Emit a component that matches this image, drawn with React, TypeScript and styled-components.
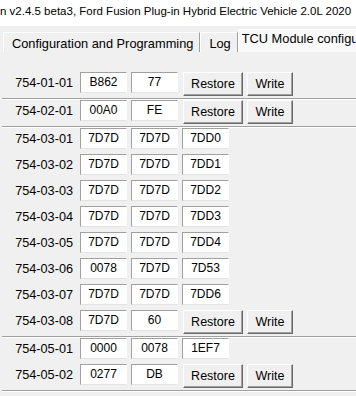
import styled, { createGlobalStyle } from 'styled-components';

interface ParamRow {
  id: string
  values: string[]
  writable?: boolean
}

const groups: ParamRow[][] = [
  [{ id: '754-01-01', values: ['B862', '77'], writable: true }],
  [{ id: '754-02-01', values: ['00A0', 'FE'], writable: true }],
  [
    { id: '754-03-01', values: ['7D7D', '7D7D', '7DD0'] },
    { id: '754-03-02', values: ['7D7D', '7D7D', '7DD1'] },
    { id: '754-03-03', values: ['7D7D', '7D7D', '7DD2'] },
    { id: '754-03-04', values: ['7D7D', '7D7D', '7DD3'] },
    { id: '754-03-05', values: ['7D7D', '7D7D', '7DD4'] },
    { id: '754-03-06', values: ['0078', '7D7D', '7D53'] },
    { id: '754-03-07', values: ['7D7D', '7D7D', '7DD6'] },
    { id: '754-03-08', values: ['7D7D', '60'], writable: true },
  ],
  [
    { id: '754-05-01', values: ['0000', '0078', '1EF7'] },
    { id: '754-05-02', values: ['0277', 'DB'], writable: true },
  ],
]

const GlobalStyle = createGlobalStyle`
  html, body {
    margin: 0;
    padding: 0;
    background: #f0f0f0;
    font-family: "Liberation Sans", Arial, sans-serif;
    color: #000;
    overflow: hidden;
  }
`

const Window = styled.div`
  width: 356px;
  height: 396px;
  overflow: hidden;
  background: #f0f0f0;
`

const TitleBar = styled.div`
  height: 26px;
  background: #fff;
  font-size: 11.5px;
  line-height: 22px;
  white-space: nowrap;
  overflow: hidden;
`

const TabStrip = styled.div`
  height: 26px;
  display: flex;
  align-items: flex-end;
  padding-left: 3px;
  white-space: nowrap;
  overflow: hidden;
`

const Tab = styled.div<{ $active?: boolean }>`
  box-sizing: border-box;
  height: ${p => (p.$active ? 23 : 20)}px;
  padding: ${p => (p.$active ? '2px 0 0 3px' : '4px 6px 0 8px')};
  font-size: 12.8px;
  line-height: 14px;
  background: ${p => (p.$active ? '#f9f9f9' : '#f0f0f0')};
  border-top: 1px solid #fff;
  border-left: 1px solid #fff;
  border-right: ${p => (p.$active ? 'none' : '1px solid #a0a0a0')};
  flex: ${p => (p.$active ? '1 0 auto' : '0 0 auto')};
`

const Content = styled.div`
  padding: 20px 0 0 2px;
`

const Group = styled.div`
  border-bottom: 1px solid #a0a0a0;
  box-shadow: 0 1px 0 #fff;
  margin-bottom: 1px;
`

const Row = styled.div`
  height: 26px;
  display: flex;
  align-items: flex-start;
  gap: 4px;
`

const Label = styled.div`
  width: 71px;
  margin-right: 3px;
  text-align: right;
  font-size: 12.7px;
  line-height: 22px;
`

const ValueBox = styled.div`
  box-sizing: border-box;
  width: 47px;
  height: 21px;
  background: #fff;
  border: 1px solid;
  border-color: #a0a0a0 #fff #e3e3e3 #a0a0a0;
  text-align: center;
  font-size: 12px;
  line-height: 19px;
`

const ButtonGroup = styled.div`
  display: flex;
  gap: 4px;
  margin-left: 1px;
`

const Button = styled.button<{ $width: number }>`
  box-sizing: border-box;
  width: ${p => p.$width}px;
  height: 24px;
  padding: 0;
  background: #f0f0f0;
  border: 1px solid;
  border-color: #fff #696969 #696969 #fff;
  box-shadow: inset -1px -1px 0 #a0a0a0;
  font-family: "Liberation Sans", Arial, sans-serif;
  font-size: 12.5px;
  color: #000;
`

export default function App() {
  return (
    <Window>
      <GlobalStyle />
      <TitleBar>n v2.4.5 beta3, Ford Fusion Plug-in Hybrid Electric Vehicle 2.0L 2020</TitleBar>
      <TabStrip>
        <Tab>Configuration and Programming</Tab>
        <Tab>Log</Tab>
        <Tab $active>TCU Module configuration</Tab>
      </TabStrip>
      <Content>
        {groups.map((rows, gi) => (
          <Group key={gi}>
            {rows.map(row => (
              <Row key={row.id}>
                <Label>{row.id}</Label>
                {row.values.map((v, i) => (
                  <ValueBox key={i}>{v}</ValueBox>
                ))}
                {row.writable && (
                  <ButtonGroup>
                    <Button $width={60}>Restore</Button>
                    <Button $width={46}>Write</Button>
                  </ButtonGroup>
                )}
              </Row>
            ))}
          </Group>
        ))}
      </Content>
    </Window>
  )
}
